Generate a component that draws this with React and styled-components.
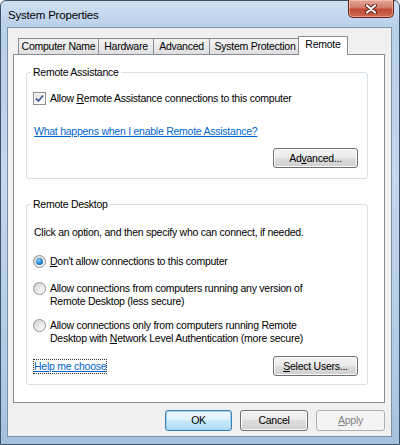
import React from 'react';
import styled, { createGlobalStyle } from 'styled-components';

const Global = createGlobalStyle`
  html, body { margin: 0; padding: 0; background: #fff; }
  body {
    font-family: "Liberation Sans", Arial, sans-serif;
    font-size: 10.5px;
    letter-spacing: -0.25px;
    color: #000;
  }
`;

const Window = styled.div`
  width: 400px;
  height: 445px;
  box-sizing: border-box;
  border: 1px solid #3d5269;
  border-radius: 6px 6px 0 0;
  background: linear-gradient(180deg, #cfe0f2 0%, #b9d0ea 6%, #c3d7ed 40%, #b2cbe6 80%, #a6c1df 100%);
  display: flex;
  flex-direction: column;
  padding: 0 7px 7px 6px;
`;

const TitleBar = styled.div`
  height: 26px;
  display: flex;
  justify-content: space-between;
  align-items: flex-start;
`;

const Title = styled.div`
  font-size: 11.5px;
  letter-spacing: -0.2px;
  line-height: 14px;
  margin: 7px 0 0 1px;
  color: #000;
`;

const CloseButton = styled.div`
  width: 46px;
  height: 18px;
  margin: -1px -2px 0 0;
  box-sizing: border-box;
  border: 1px solid #6b2419;
  border-top: none;
  border-radius: 0 0 5px 5px;
  background: linear-gradient(180deg, #e5a898 0%, #d47c68 45%, #c04a34 55%, #cc6a50 100%);
  box-shadow: inset 0 0 0 1px rgba(255, 210, 200, 0.5);
  display: flex;
  align-items: center;
  justify-content: center;
`;

const Client = styled.div`
  flex: 1;
  background: #f0f0f0;
  border: 1px solid #7f91a6;
  display: flex;
  flex-direction: column;
  padding: 8px 6px 5px 5px;
`;

const TabStrip = styled.div`
  height: 18px;
  display: flex;
  align-items: flex-end;
  padding-left: 5px;
`;

const Tab = styled.div`
  position: relative;
  box-sizing: border-box;
  width: ${p => p.w}px;
  height: ${p => (p.active ? 19 : 16)}px;
  margin: ${p => (p.active ? '0 0 -1px -2px' : '0 -1px 0 0')};
  z-index: ${p => (p.active ? 2 : 1)};
  border: 1px solid #898c95;
  border-bottom: none;
  background: ${p => (p.active ? '#fff' : 'linear-gradient(180deg, #f3f3f3 0%, #ebebeb 50%, #dedede 100%)')};
  text-align: center;
  line-height: 15px;
  white-space: nowrap;
`;

const Panel = styled.div`
  height: 349px;
  box-sizing: border-box;
  background: #fff;
  border: 1px solid #898c95;
  padding: 11px 16px 0 12px;
  display: flex;
  flex-direction: column;
`;

const Group = styled.fieldset`
  margin: ${p => p.top || 0}px 0 0 0;
  padding: 0 9px 0 7px;
  border: 1px solid #d5dfe5;
  border-radius: 3px;
  min-width: 0;
`;

const Legend = styled.legend`
  padding: 0 2px;
  margin-left: -3px;
  line-height: 13px;
`;

const GroupBody = styled.div`
  display: flex;
  flex-direction: column;
  padding: ${p => p.pad};
`;

const Line = styled.div`
  line-height: 13px;
  margin-top: ${p => p.top || 0}px;
`;

const OptionRow = styled.div`
  display: flex;
  align-items: flex-start;
  gap: 4px;
  line-height: 13px;
  margin-top: ${p => p.top || 0}px;
`;

const CheckBox = styled.span`
  width: 13px;
  height: 13px;
  box-sizing: border-box;
  margin-left: -1px;
  border: 1px solid #8e8f8f;
  background: linear-gradient(135deg, #dcdcdc 0%, #f4f4f4 60%, #ffffff 100%);
  box-shadow: inset 0 0 0 1px #f8f8f8;
  display: flex;
  align-items: center;
  justify-content: center;
  flex-shrink: 0;
`;

const Radio = styled.span`
  width: 13px;
  height: 13px;
  box-sizing: border-box;
  margin-left: -1px;
  border-radius: 50%;
  border: 1px solid #8e8f8f;
  background: linear-gradient(135deg, #d0d0d0 0%, #eeeeee 60%, #ffffff 100%);
  display: flex;
  align-items: center;
  justify-content: center;
  flex-shrink: 0;
`;

const RadioDot = styled.span`
  width: 7px;
  height: 7px;
  border-radius: 50%;
  background: radial-gradient(circle at 40% 35%, #8fd3ff 0%, #2a8fd6 45%, #0c4f8c 100%);
`;

const Link = styled.span`
  color: #0066cc;
  text-decoration: underline;
  line-height: 13px;
`;

const FocusLink = styled(Link)`
  outline: 1px dotted #333;
  outline-offset: 0;
`;

const ButtonRow = styled.div`
  display: flex;
  justify-content: ${p => (p.spread ? 'space-between' : 'flex-end')};
  align-items: center;
  gap: 8px;
  margin-top: ${p => p.top || 0}px;
`;

const Button = styled.div`
  width: ${p => p.w}px;
  height: ${p => p.h || 20}px;
  box-sizing: border-box;
  border: 1px solid ${p => (p.primary ? '#3c7fb1' : p.disabled ? '#adb2b5' : '#707070')};
  border-radius: 3px;
  background: ${p =>
    p.primary
      ? 'linear-gradient(180deg, #ecf7fd 0%, #ddf1fc 50%, #c6e9fc 50%, #b1dcf6 100%)'
      : p.disabled
      ? '#f4f4f4'
      : 'linear-gradient(180deg, #f2f2f2 0%, #ebebeb 50%, #dddddd 50%, #cfcfcf 100%)'};
  box-shadow: inset 0 0 0 1px ${p => (p.primary ? '#9fd5f2' : p.disabled ? '#f4f4f4' : '#fbfbfb')};
  color: ${p => (p.disabled ? '#838383' : '#000')};
  display: flex;
  align-items: center;
  justify-content: center;
  line-height: 13px;
`;

const tabs = [
  { label: 'Computer Name', w: 81 },
  { label: 'Hardware', w: 56 },
  { label: 'Advanced', w: 57 },
  { label: 'System Protection', w: 92 },
  { label: 'Remote', w: 50, active: true },
];

export default function App() {
  return (
    <>
      <Global />
      <Window>
        <TitleBar>
          <Title>System Properties</Title>
          <CloseButton>
            <svg width="12" height="10" viewBox="0 0 12 10">
              <path d="M2 1.5 L10 8.5 M10 1.5 L2 8.5" stroke="#5a1a12" strokeWidth="4" strokeLinecap="round" />
              <path d="M2 1.5 L10 8.5 M10 1.5 L2 8.5" stroke="#fff" strokeWidth="2.2" strokeLinecap="round" />
            </svg>
          </CloseButton>
        </TitleBar>
        <Client>
          <TabStrip>
            {tabs.map(t => (
              <Tab key={t.label} w={t.w} active={t.active}>{t.label}</Tab>
            ))}
          </TabStrip>
          <Panel>
            <Group>
              <Legend>Remote Assistance</Legend>
              <GroupBody pad="13px 0 10px 0">
                <OptionRow>
                  <CheckBox>
                    <svg width="9" height="9" viewBox="0 0 9 9">
                      <path d="M1 4.5 L3.5 7 L8 1.5" stroke="#4a5f97" strokeWidth="1.8" fill="none" />
                    </svg>
                  </CheckBox>
                  <span>Allow <u>R</u>emote Assistance connections to this computer</span>
                </OptionRow>
                <Line top={20}><Link>What happens when I enable Remote Assistance?</Link></Line>
                <ButtonRow top={10}>
                  <Button w={85}>Ad<u>v</u>anced...</Button>
                </ButtonRow>
              </GroupBody>
            </Group>
            <Group top={19}>
              <Legend>Remote Desktop</Legend>
              <GroupBody pad="15px 0 8px 0">
                <Line>Click an option, and then specify who can connect, if needed.</Line>
                <OptionRow top={16}>
                  <Radio><RadioDot /></Radio>
                  <span><u>D</u>on't allow connections to this computer</span>
                </OptionRow>
                <OptionRow top={14}>
                  <Radio />
                  <span>Allow connections from computers running any version of<br />Remote Desktop (less secure)</span>
                </OptionRow>
                <OptionRow top={11}>
                  <Radio />
                  <span>Allow connections only from computers running Remote<br />Desktop with <u>N</u>etwork Level Authentication (more secure)</span>
                </OptionRow>
                <ButtonRow spread top={11}>
                  <FocusLink>Help me choose</FocusLink>
                  <Button w={85}><u>S</u>elect Users...</Button>
                </ButtonRow>
              </GroupBody>
            </Group>
          </Panel>
          <ButtonRow top={7}>
            <Button primary w={67} h={21}>OK</Button>
            <Button w={68} h={21}>Cancel</Button>
            <Button disabled w={69} h={21}><u>A</u>pply</Button>
          </ButtonRow>
        </Client>
      </Window>
    </>
  );
}
